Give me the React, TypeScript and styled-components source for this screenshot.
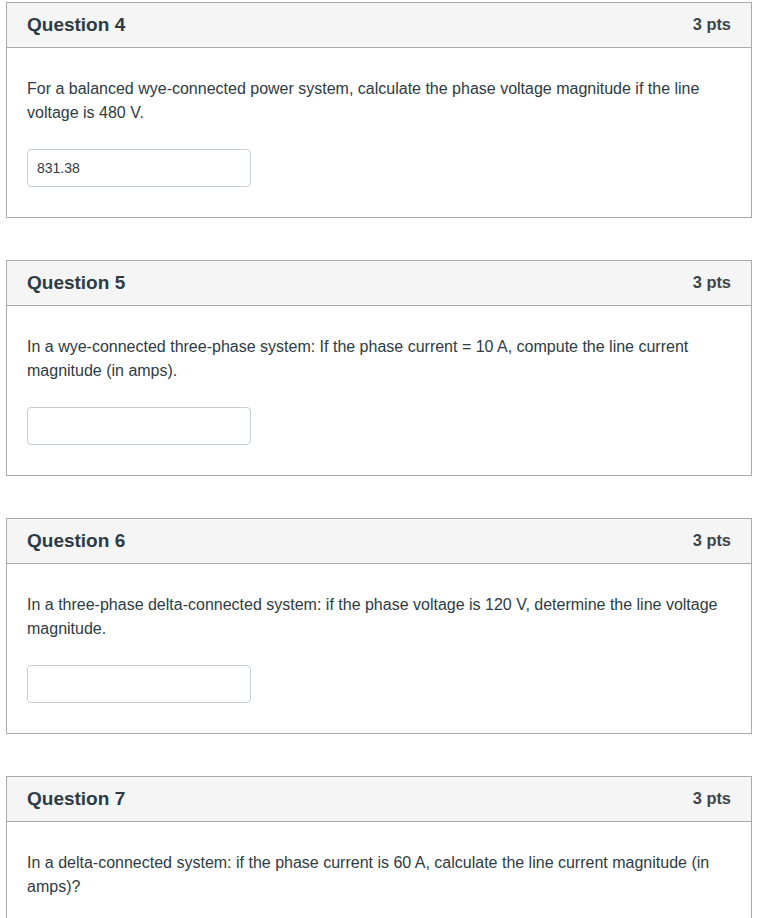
import React from "react";
import styled, { createGlobalStyle } from "styled-components";

const Global = createGlobalStyle`
  html, body { margin: 0; padding: 0; background: #ffffff; }
  body { font-family: "Liberation Sans", Arial, Helvetica, sans-serif; color: #2d3b45; }
`;

const Page = styled.div`
  display: flex;
  flex-direction: column;
  gap: 42px;
  padding: 2px 6px 0 6px;
`;

const Card = styled.section`
  border: 1px solid #aaaaaa;
  background: #ffffff;
  flex-shrink: 0;
  height: 216px;
  box-sizing: border-box;
  display: flex;
  flex-direction: column;
`;

const Header = styled.header`
  height: 45px;
  box-sizing: border-box;
  background: #f5f5f5;
  border-bottom: 1px solid #aaaaaa;
  display: flex;
  align-items: center;
  justify-content: space-between;
  padding: 0 20px 1px 20px;
`;

const Title = styled.h2`
  margin: 0;
  font-size: 19px;
  font-weight: 700;
  color: #2d3b45;
`;

const Points = styled.span`
  font-size: 16.4px;
  font-weight: 700;
  color: #3f4549;
`;

const Body = styled.div`
  padding: 29px 20px 0 20px;
  display: flex;
  flex-direction: column;
  gap: 24px;
  align-items: flex-start;
`;

const Text = styled.p`
  margin: 0;
  font-size: 16px;
  line-height: 24px;
  color: #2d3b45;
`;

const Answer = styled.input`
  width: 224px;
  height: 38px;
  box-sizing: border-box;
  border: 1px solid #c7cdd1;
  border-radius: 4px;
  padding: 0 9px;
  font-family: "Liberation Sans", Arial, sans-serif;
  font-size: 14px;
  color: #2d3b45;
  background: #ffffff;
  outline: none;
`;

const questions = [
  {
    n: 4,
    text: "For a balanced wye-connected power system, calculate the phase voltage magnitude if the line voltage is 480 V.",
    value: "831.38",
  },
  {
    n: 5,
    text: "In a wye-connected three-phase system: If the phase current = 10 A, compute the line current magnitude (in amps).",
    value: "",
  },
  {
    n: 6,
    text: "In a three-phase delta-connected system: if the phase voltage is 120 V, determine the line voltage magnitude.",
    value: "",
  },
  {
    n: 7,
    text: "In a delta-connected system: if the phase current is 60 A, calculate the line current magnitude (in amps)?",
    value: "",
  },
];

export default function App() {
  return (
    <>
      <Global />
      <Page>
        {questions.map((q) => (
          <Card key={q.n}>
            <Header>
              <Title>Question {q.n}</Title>
              <Points>3 pts</Points>
            </Header>
            <Body>
              <Text>{q.text}</Text>
              <Answer type="text" defaultValue={q.value} />
            </Body>
          </Card>
        ))}
      </Page>
    </>
  );
}
